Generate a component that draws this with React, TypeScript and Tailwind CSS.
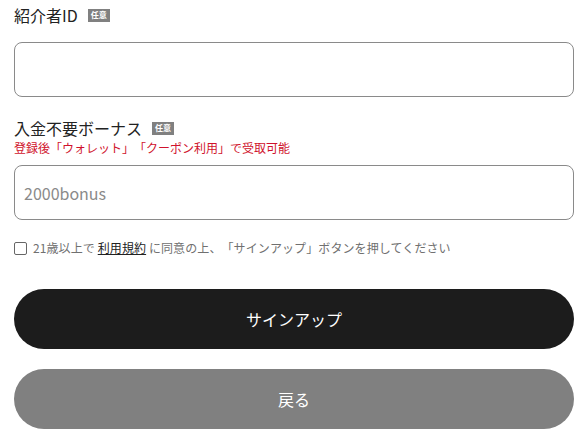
import React from 'react';

const Badge = () => (
  <span className="ml-[10px] inline-flex h-[13px] items-center bg-[#808080] px-[3px] text-[8px] font-bold leading-none text-white">
    任意
  </span>
);

export default function App() {
  return (
    <div
      className="flex w-[588px] flex-col bg-white px-[14px] pt-[4px] [text-spacing-trim:space-all]"
      style={{ fontFamily: '"Noto Sans CJK JP", "Noto Sans", sans-serif' }}
    >
      <div className="flex h-[22px] items-center">
        <span className="text-[16px] text-[#222]">紹介者ID</span>
        <Badge />
      </div>
      <input
        type="text"
        className="mt-[16px] h-[55px] w-full rounded-[8px] border border-[#8a8a8a] px-[9px] text-[16px] outline-none"
      />

      <div className="mt-[19px] flex h-[24px] items-center">
        <span className="text-[16px] text-[#222]">入金不要ボーナス</span>
        <Badge />
      </div>
      <p className="h-[16px] text-[12px] leading-[16px] text-[#d0122c]">
        登録後「ウォレット」「クーポン利用」で受取可能
      </p>
      <input
        type="text"
        placeholder="2000bonus"
        className="mt-[9px] h-[55px] w-full rounded-[8px] border border-[#8a8a8a] px-[9px] text-[16px] outline-none placeholder:text-[#8a8a8a]"
      />

      <label className="mt-[19px] flex h-[18px] items-center gap-[6px] text-[12px] leading-[18px] tracking-[0.1px] text-[#707070]">
        <span className="h-[13px] w-[13px] shrink-0 rounded-[2px] border border-[#666] bg-white" />
        <span>
          21歳以上で <span className="text-[#222] underline">利用規約</span>{' '}
          に同意の上、「サインアップ」ボタンを押してください
        </span>
      </label>

      <button className="mt-[32px] h-[60px] w-full rounded-full bg-[#1c1c1c] text-[16px] text-white">
        サインアップ
      </button>
      <button className="mt-[20px] h-[60px] w-full rounded-full bg-[#808080] text-[16px] text-white">
        戻る
      </button>
      <div className="h-[18px]" />
    </div>
  );
}
